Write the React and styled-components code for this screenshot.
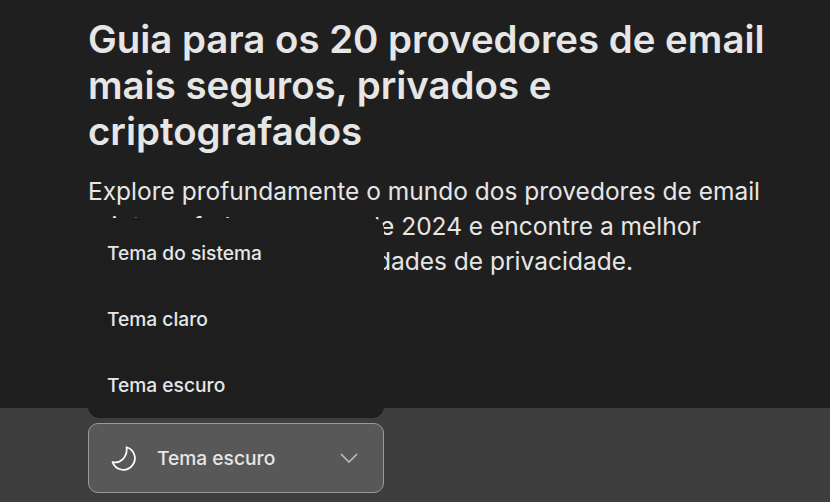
import React from "react";
import styled, { createGlobalStyle } from "styled-components";

const Global = createGlobalStyle`
  html, body {
    margin: 0;
    height: 100%;
    background: #1f1f1f;
    overflow: hidden;
  }
  body {
    font-family: Inter, "Noto Sans", sans-serif;
  }
`;

const Page = styled.div`
  position: relative;
  width: 830px;
  height: 502px;
  display: flex;
  flex-direction: column;
  background: #1f1f1f;
  color: #e6e6e6;
`;

const Hero = styled.section`
  flex: 1;
  padding: 16px 60px 0 88px;
`;

const Title = styled.h1`
  margin: 0;
  font-size: 38.4px;
  line-height: 46px;
  font-weight: 600;
  color: #e6e6e6;
`;

const Lead = styled.p`
  margin: 20px 0 0;
  font-size: 24.5px;
  line-height: 35px;
  font-weight: 400;
  color: #e6e6e6;
`;

const Footer = styled.footer`
  height: 94px;
  box-sizing: border-box;
  padding: 15px 0 0 88px;
  background: #3e3e3e;
`;

const Picker = styled.div`
  position: relative;
  width: 296px;
`;

const Menu = styled.ul`
  position: absolute;
  left: 0;
  right: 0;
  bottom: 75px;
  margin: 0;
  padding: 2px 0 0;
  box-sizing: border-box;
  list-style: none;
  height: 200px;
  display: flex;
  flex-direction: column;
  background: #1e1e1e;
  border-radius: 12px;
`;

const MenuItem = styled.li`
  height: 66px;
  display: flex;
  align-items: center;
  padding-left: 19px;
  font-size: 19.2px;
  font-weight: 500;
  color: #e6e6e6;
`;

const Trigger = styled.button`
  width: 296px;
  height: 70px;
  box-sizing: border-box;
  display: flex;
  align-items: center;
  padding: 0 25px 0 21px;
  background: #585858;
  border: 1px solid #9a9a9a;
  border-radius: 10px;
  color: #e6e6e6;
  font-family: inherit;
  font-size: 19.2px;
  font-weight: 500;
`;

const Label = styled.span`
  flex: 1;
  margin-left: 21px;
  text-align: left;
`;

const Moon = () => (
  <svg width="26" height="26" viewBox="0 0 26 26" fill="none" stroke="#fff" strokeWidth="1.7" strokeLinejoin="round">
    <path d="M16.5 2.2A11.5 11.5 0 1 1 2.5 17C10 19 18 12 16.5 2.2z" />
  </svg>
);

const Chevron = () => (
  <svg width="18" height="10" viewBox="0 0 18 10" fill="none" stroke="#bdbdbd" strokeWidth="1.6">
    <path d="M1 1l8 8 8-8" />
  </svg>
);

const options = ["Tema do sistema", "Tema claro", "Tema escuro"];

export default function App() {
  return (
    <Page>
      <Global />
      <Hero>
        <Title>Guia para os 20 provedores de email mais seguros, privados e criptografados</Title>
        <Lead>
          Explore profundamente o mundo dos provedores de email criptografados seguros de 2024 e encontre a melhor
          opção para suas necessidades de privacidade.
        </Lead>
      </Hero>
      <Footer>
        <Picker>
          <Menu>
            {options.map((o) => (
              <MenuItem key={o}>{o}</MenuItem>
            ))}
          </Menu>
          <Trigger>
            <Moon />
            <Label>Tema escuro</Label>
            <Chevron />
          </Trigger>
        </Picker>
      </Footer>
    </Page>
  );
}
